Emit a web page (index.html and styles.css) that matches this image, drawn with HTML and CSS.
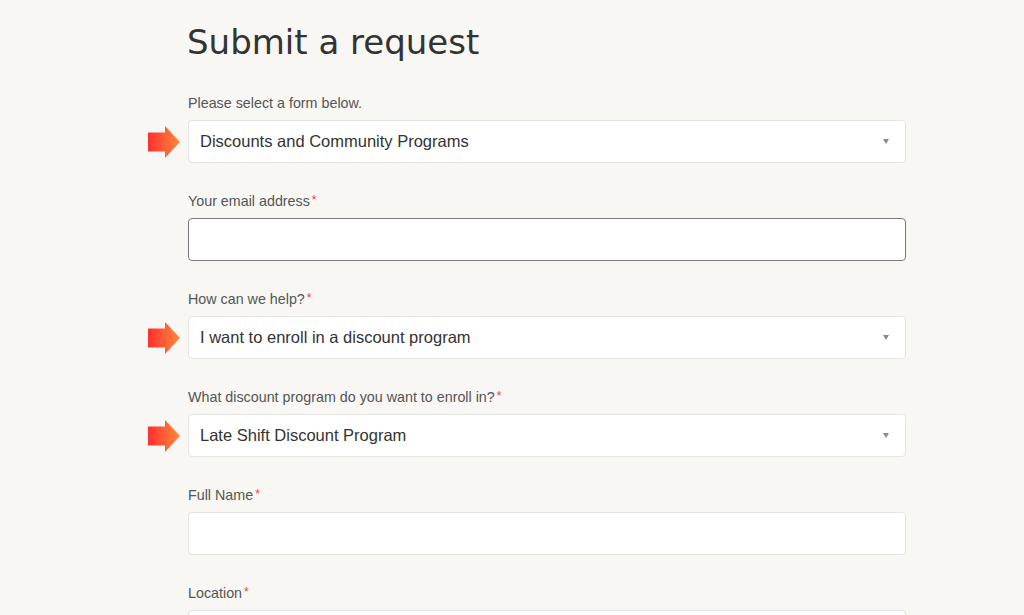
FILE: index.html
```html
<!DOCTYPE html>
<html lang="en">
<head>
    <meta charset="UTF-8">
    <meta name="viewport" content="width=device-width, initial-scale=1.0">
    <title>Submit a request</title>

    <link rel="stylesheet" href="styles.css">
</head>
<body>
<div class="page">
    <h1>Submit a request</h1>

    <div class="field">
        <label>Please select a form below.</label>
        <div class="box select">
            <span>Discounts and Community Programs</span>
            <i class="caret"></i>
        </div>
        <svg class="pointer" width="32" height="32" viewBox="0 0 32 32"><defs><linearGradient id="g1" x1="0" x2="1" y1="0" y2="0"><stop offset="0" stop-color="#ff2f2f"/><stop offset="1" stop-color="#ff8a3d"/></linearGradient></defs><path d="M0 6.5h17V0l15 16-15 16v-6.5H0z" fill="url(#g1)"/></svg>
    </div>

    <div class="field">
        <label>Your email address<em>*</em></label>
        <div class="box focus"></div>
    </div>

    <div class="field">
        <label>How can we help?<em>*</em></label>
        <div class="box select">
            <span>I want to enroll in a discount program</span>
            <i class="caret"></i>
        </div>
        <svg class="pointer" width="32" height="32" viewBox="0 0 32 32"><path d="M0 6.5h17V0l15 16-15 16v-6.5H0z" fill="url(#g1)"/></svg>
    </div>

    <div class="field">
        <label>What discount program do you want to enroll in?<em>*</em></label>
        <div class="box select">
            <span>Late Shift Discount Program</span>
            <i class="caret"></i>
        </div>
        <svg class="pointer" width="32" height="32" viewBox="0 0 32 32"><path d="M0 6.5h17V0l15 16-15 16v-6.5H0z" fill="url(#g1)"/></svg>
    </div>

    <div class="field">
        <label>Full Name<em>*</em></label>
        <div class="box"></div>
    </div>

    <div class="field">
        <label>Location<em>*</em></label>
        <div class="box"></div>
    </div>
</div>
</body>
</html>
```

FILE: styles.css
```css
body {
    margin: 0;
    background-color: #f8f7f4;
    color: #333;
    font-family: "Liberation Sans", Arial, sans-serif;
}

.page {
    width: 719px;
    margin-left: 187px;
}

h1 {
    font-family: "DejaVu Sans", sans-serif;
    font-weight: normal;
    font-size: 34px;
    line-height: 40px;
    color: #333;
    margin: 22px 0 32px;
}

.field {
    position: relative;
    margin-bottom: 28px;
}

label {
    display: block;
    font-size: 14.3px;
    line-height: 18px;
    color: #555;
    margin: 0 0 8px 1px;
}

label em {
    font-style: normal;
    color: #e8423a;
    font-size: 12px;
    vertical-align: 2px;
    margin-left: 2px;
}

.box {
    height: 41px;
    background-color: #fff;
    border: 1px solid #e4e4e2;
    border-radius: 4px;
    margin-left: 1px;
    display: flex;
    align-items: center;
    padding: 0 11px;
}

.box.focus {
    border-color: #7a7a7a;
}

.select span {
    flex: 1;
    font-size: 16.5px;
    color: #333;
}

.caret {
    width: 0;
    height: 0;
    border-left: 3px solid transparent;
    border-right: 3px solid transparent;
    border-top: 5px solid #8a8a92;
    margin-right: 5px;
}

.pointer {
    position: absolute;
    left: -39px;
    bottom: 5px;
}
```
